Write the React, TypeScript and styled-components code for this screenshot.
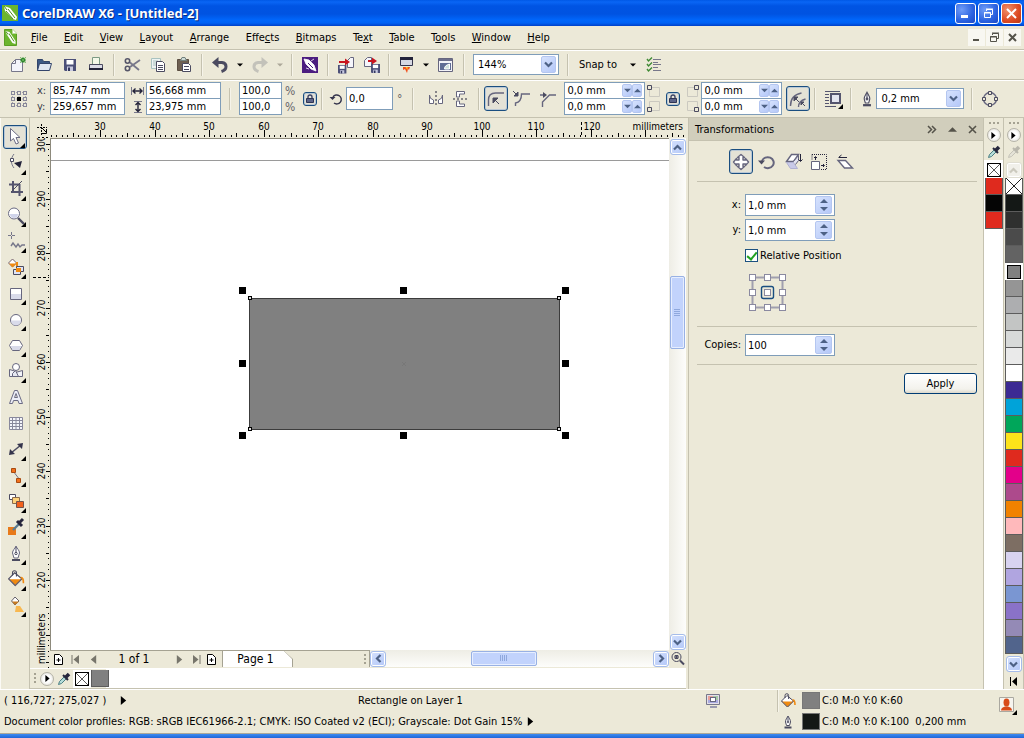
import React from 'react';
import styled, { createGlobalStyle, css } from 'styled-components';

const face = '#ece9d8';
const shade = '#c5c2b0';
const field = '#7f9db9';
const ink = '#4b4b60';
const ui = '"DejaVu Sans Condensed", "DejaVu Sans", sans-serif';

const GlobalStyle = createGlobalStyle`
  * { box-sizing: border-box; }
  html, body { margin: 0; height: 100%; }
  body { font: 11px/14px ${ui}; color: #000; background: ${face}; }
  button, input, select { font: inherit; color: inherit; margin: 0; padding: 0; }
  button { border: 0; background: none; }
  svg { display: block; flex: none; }
`;

const AppWindow = styled.div`
  display: flex;
  flex-direction: column;
  min-height: 100vh;
  overflow: hidden;
  background: ${face};
`;

/* ---------- title bar and menu ---------- */

const TitleBar = styled.header`
  display: flex;
  align-items: center;
  gap: 3px;
  height: 26px;
  padding: 0 2px 0 2px;
  background: linear-gradient(#0058e6 0, #0a66f5 2px, #0054e3 6px, #0053e1 14px, #0066fb 20px, #0062f4 23px, #0040c8 26px);
`;

const Title = styled.h1`
  flex: 1;
  margin: 0;
  font: bold 13px/18px "Noto Sans", sans-serif;
  color: #fff;
  text-shadow: 1px 1px #0a2a80;
`;

const CaptionButton = styled.button<{ $close?: boolean }>`
  display: flex;
  align-items: center;
  justify-content: center;
  width: 21px;
  height: 21px;
  margin-left: -1px;
  border: 1px solid #fff;
  border-radius: 3px;
  background: ${p =>
    p.$close
      ? 'radial-gradient(circle at 30% 30%, #f0906c, #dd4a22 60%, #b93a14)'
      : 'radial-gradient(circle at 30% 30%, #6f9cf8, #2b62e0 60%, #1c49c6)'};
`;

const MenuBar = styled.nav`
  display: flex;
  align-items: center;
  height: 23px;
  padding: 0 3px 0 4px;
`;

const Menus = styled.div`
  display: flex;
  flex: 0 1 533px;
  justify-content: space-between;
  margin-right: auto;
  padding-left: 14px;
`;

const MenuItem = styled.button`
  height: 18px;
`;

const DocButton = styled.button`
  display: flex;
  align-items: center;
  justify-content: center;
  width: 17px;
  height: 17px;
  margin-left: 1px;
  background: #f8f7f1;
`;

/* ---------- tool bars ---------- */

const Bar = styled.div<{ $height: number }>`
  display: flex;
  align-items: center;
  height: ${p => p.$height}px;
  border-top: 1px solid ${shade};
  box-shadow: inset 0 1px #fff;
`;

const StandardBar = styled(Bar)`
  padding-left: 5px;
`;

const PropertyBar = styled(Bar)`
  padding-left: 9px;
  border-bottom: 1px solid ${shade};
`;

const Divider = styled.span<{ $gap?: number }>`
  flex: none;
  width: 2px;
  height: 22px;
  margin: 0 ${p => p.$gap ?? 4}px;
  border-left: 1px solid ${shade};
  border-right: 1px solid #f6f4ea;
`;

const pressed = css`
  border: 1px solid #1a4e80;
  border-radius: 3px;
  background: #e4e2d6;
  box-shadow: inset 0 0 0 1px #b9c8d6;
`;

const IconButton = styled.button<{ $width?: number; $pressed?: boolean }>`
  display: flex;
  flex: none;
  align-items: center;
  justify-content: center;
  width: ${p => p.$width ?? 26}px;
  height: 25px;
  ${p => p.$pressed && pressed}
`;

const LockButton = styled.button`
  display: flex;
  flex: none;
  align-items: center;
  justify-content: center;
  width: 14px;
  height: 14px;
  ${pressed}
`;

const Pair = styled.div<{ $width?: number; $gap?: number }>`
  display: flex;
  flex: none;
  flex-direction: column;
  align-items: flex-start;
  gap: ${p => p.$gap ?? 0}px;
  width: ${p => (p.$width ? `${p.$width}px` : 'auto')};
`;

const Caption = styled.label`
  line-height: 16px;
  color: #3c3c48;
`;

const Unit = styled.span`
  font-size: 12px;
  line-height: 16px;
  color: #66646a;
`;

const Field = styled.div<{ $width: number; $height: number }>`
  display: flex;
  flex: none;
  align-items: center;
  width: ${p => p.$width}px;
  height: ${p => p.$height}px;
  padding: 1px 2px 1px 2px;
  border: 1px solid ${field};
  background: #fff;
  & + & { margin-top: -1px; }
`;

const Input = styled.input`
  flex: 1;
  min-width: 0;
  height: 100%;
  border: 0;
  outline: 0;
  background: none;
`;

const Select = styled.select`
  flex: 1;
  min-width: 0;
  height: 100%;
  padding-left: 2px;
  border: 0;
  outline: 0;
  background: none;
  appearance: none;
`;

const blue = css`
  border: 1px solid #b4c6f0;
  border-radius: 2px;
  background: linear-gradient(135deg, #d6e2fd, #b5c8f8);
`;

const Arrow = styled.span`
  display: flex;
  align-items: center;
  justify-content: center;
  width: 15px;
  height: 100%;
  ${blue}
`;

const MiniSpin = styled.button`
  display: flex;
  align-items: center;
  justify-content: center;
  width: 10px;
  height: 13px;
  ${blue}
`;

const TallSpin = styled.div`
  display: flex;
  flex-direction: column;
  width: 17px;
  height: 18px;
  ${blue}
`;

const TallSpinButton = styled.button`
  display: flex;
  flex: 1;
  align-items: center;
  justify-content: center;
`;

/* ---------- work area ---------- */

const Main = styled.main`
  display: flex;
  flex: 1;
  min-height: 0;
`;

const Toolbox = styled.div`
  display: flex;
  flex: none;
  flex-direction: column;
  width: 30px;
  padding: 6px 0 0 2px;
  border-left: 1px solid #fbfaf5;
  border-right: 1px solid ${shade};
`;

const ToolButton = styled.button<{ $pressed?: boolean }>`
  width: 26px;
  height: 26px;
  ${p => p.$pressed && css`
    width: 24px;
    height: 24px;
    margin: 1px 0 2px;
    & > svg { margin: -2px; }
    ${pressed}
  `}
`;

const Center = styled.section`
  display: flex;
  flex: 1;
  flex-direction: column;
  min-width: 0;
`;

const DrawingGrid = styled.div`
  display: grid;
  flex: 1;
  grid-template: 20px 1fr 18px / 20px 1fr 17px;
  min-height: 0;
  padding-right: 2px;
`;

const RulerTop = styled.div`
  grid-column: 2 / 4;
  min-width: 0;
`;

const RulerSide = styled.div`
  grid-row: 2 / 4;
  min-height: 0;
`;

const RulerSvg = styled.svg`
  width: 100%;
  height: 100%;
  overflow: hidden;
  font: 10px ${ui};
`;

const Canvas = styled.div`
  min-width: 0;
  min-height: 0;
  overflow: hidden;
  border-left: 1px solid #8d8a7c;
  border-top: 1px solid #8d8a7c;
  background: #fff;
`;

const ScrollY = styled.div`
  display: flex;
  flex-direction: column;
  align-items: center;
  padding-top: 1px;
  background: linear-gradient(90deg, #eeede5, #fdfdfb);
`;

const ScrollX = styled.div`
  display: flex;
  flex: 1;
  align-items: center;
  height: 17px;
  background: linear-gradient(#eeede5, #fdfdfb);
`;

const ScrollButton = styled.button<{ $off?: boolean }>`
  display: flex;
  flex: none;
  align-items: center;
  justify-content: center;
  width: 16px;
  height: 16px;
  border: 1px solid ${p => (p.$off ? '#e0ded2' : '#a5bcea')};
  border-radius: 3px;
  box-shadow: inset 0 0 0 1px #fff;
  background: ${p => (p.$off ? '#f1f0ea' : 'linear-gradient(135deg, #d3e0fd, #b4c8f8)')};
`;

const Thumb = styled.div<{ $vertical?: boolean }>`
  display: flex;
  flex: none;
  align-items: center;
  justify-content: center;
  width: ${p => (p.$vertical ? 15 : 66)}px;
  height: ${p => (p.$vertical ? 73 : 15)}px;
  border: 1px solid #98b1e4;
  border-radius: 2px;
  box-shadow: inset 0 0 0 1px #e6eeff;
  background: #c2d3fc;
`;

const Track = styled.span<{ $grow: number }>`
  flex: ${p => p.$grow} 1 0;
`;

const PageBar = styled.div`
  display: flex;
  grid-column: 2 / 4;
  align-items: flex-start;
  min-width: 0;
`;

const PageTools = styled.div`
  display: flex;
  flex: 317 1 0;
  align-items: center;
  height: 17px;
  padding: 0 2px;
  border-top: 1px solid #a5a292;
  border-right: 1px solid #a5a292;
`;

const PageScroll = styled.div`
  display: flex;
  flex: 318 1 0;
`;

const PageButton = styled.button<{ $width: number }>`
  display: flex;
  justify-content: center;
  width: ${p => p.$width}px;
`;

const PageCount = styled.output`
  width: 68px;
  text-align: center;
  font-size: 12px;
`;

const TabEdge = styled.div`
  width: 71px;
  height: 16px;
  margin-left: 2px;
  padding: 0 1px;
  background: #a5a292;
  clip-path: polygon(0 0, 62px 0, 100% 8px, 100% 100%, 0 100%);
`;

const Tab = styled.button`
  width: 69px;
  height: 16px;
  padding-right: 4px;
  font-size: 12px;
  background: #fff;
  clip-path: polygon(0 0, 61px 0, 100% 8px, 100% 100%, 0 100%);
`;

const Spacer = styled.span`
  flex: 1;
`;

const DocumentPalette = styled.div`
  display: flex;
  align-items: center;
  height: 21px;
  margin-right: 2px;
  border-top: 1px solid #fff;
  border-bottom: 1px solid ${shade};
  background: linear-gradient(90deg, ${face} 76px, #fff 76px);
`;

/* ---------- docker ---------- */

const Docker = styled.aside`
  flex: none;
  width: 296px;
  border-left: 1px solid ${shade};
  border-right: 1px solid ${shade};
`;

const DockerHead = styled.div`
  display: flex;
  align-items: center;
  gap: 2px;
  height: 23px;
  padding: 1px 2px 0 6px;
  border-bottom: 1px solid ${shade};
  background: #d1cebc;
`;

const DockerTitle = styled.h2`
  flex: 1;
  margin: 0;
  font: inherit;
`;

const HeadButton = styled.button`
  display: flex;
  align-items: center;
  justify-content: center;
  width: 18px;
  height: 18px;
`;

const DockerSection = styled.section`
  margin: 0 6px 0 8px;
  border-bottom: 1px solid ${shade};
`;

const Modes = styled(DockerSection)`
  display: flex;
  gap: 2px;
  padding: 8px 0 7px 32px;
`;

const Position = styled(DockerSection)`
  display: grid;
  grid-template-columns: 44px auto;
  column-gap: 4px;
  row-gap: 3px;
  padding: 12px 0 14px;
`;

const Copies = styled(DockerSection)`
  display: grid;
  grid-template-columns: 44px auto;
  column-gap: 4px;
  padding: 7px 0 8px;
`;

const RowLabel = styled.label`
  align-self: center;
  justify-self: end;
  white-space: nowrap;
`;

const CheckLabel = styled.label`
  display: flex;
  grid-column: 2;
  align-items: center;
  gap: 2px;
  height: 23px;
`;

const Check = styled.input`
  display: flex;
  justify-content: center;
  width: 13px;
  height: 13px;
  margin: 0;
  border: 1px solid #1c5180;
  background: #fff;
  appearance: none;
  &:checked::before {
    content: '';
    width: 4px;
    height: 8px;
    border: solid #21a121;
    border-width: 0 2px 2px 0;
    transform: rotate(40deg);
  }
`;

const AnchorButton = styled.button`
  grid-column: 2;
  justify-self: start;
  margin: 3px 0 0 3px;
`;

const DockerFoot = styled.div`
  display: flex;
  justify-content: flex-end;
  padding: 8px 6px 0 0;
`;

const ApplyButton = styled.button`
  width: 73px;
  height: 21px;
  border: 1px solid #003c74;
  border-radius: 3px;
  background: linear-gradient(#fff, #f3f2ec 80%, #dcd8cb);
`;

/* ---------- colour palettes ---------- */

const Palette = styled.div<{ $white?: boolean }>`
  display: flex;
  flex: none;
  flex-direction: column;
  align-items: center;
  width: 20px;
  padding-top: 4px;
  border-right: 1px solid ${shade};
  background: ${p => (p.$white ? `linear-gradient(${face} 42px, #fff 42px)` : face)};
`;

const RoundButton = styled.button`
  display: flex;
  align-items: center;
  justify-content: center;
  width: 14px;
  height: 14px;
  border: 1px solid #b5b3a8;
  border-radius: 50%;
  background: radial-gradient(#fff 40%, #d8d6cc);
`;

const Swatch = styled.button<{ $color: string; $selected?: boolean }>`
  flex: none;
  width: 18px;
  height: 17px;
  border: 1px solid #5c5c5c;
  border-top-width: 0;
  background: ${p => p.$color};
  ${p => p.$selected && css`
    border: 1px solid #000;
    outline: 2px solid #fff;
    width: 14px;
    height: 14px;
    margin: 2px 2px 1px;
  `}
`;

const PaletteHead = styled.div<{ $tail: number }>`
  display: flex;
  flex: none;
  flex-direction: column;
  align-items: center;
  gap: 3px;
  height: ${p => p.$tail}px;
`;

const PaletteFoot = styled.div`
  display: flex;
  flex-direction: column;
  align-items: center;
  gap: 5px;
  padding-top: 2px;
`;

/* ---------- status bar ---------- */

const StatusBar = styled.footer`
  display: flex;
  height: 44px;
  padding: 0 6px 0 4px;
  border-top: 1px solid #fff;
`;

const StatusMain = styled.div`
  flex: 1;
  min-width: 0;
`;

const StatusRow = styled.div`
  display: flex;
  align-items: center;
  height: 21px;
  white-space: pre;
`;

const Coordinates = styled.span`
  display: flex;
  align-items: center;
  gap: 10px;
  width: 354px;
`;

const StatusText = styled.span`
  flex: 1;
`;

const ProfileText = styled.span`
  margin-right: 4px;
`;

const StatusColors = styled.div`
  width: 218px;
`;

const StatusSwatch = styled.span<{ $color: string }>`
  width: 18px;
  height: 17px;
  margin: 0 2px 0 6px;
  border: 1px solid #777;
  background: ${p => p.$color};
`;

const Proof = styled.span`
  width: 71px;
`;

const UserButton = styled.button`
  margin-top: 6px;
  width: 20px;
  height: 20px;
`;

const FrameEdge = styled.div`
  height: 5px;
  border-top: 1px solid #aca899;
  background: linear-gradient(#3d8af0, #1f66d8);
`;

/* ---------- drawings ---------- */

type G = { children: React.ReactNode; size?: number; h?: number };

const Glyph = ({ children, size = 20, h }: G) => (
  <svg width={size} height={h ?? size} viewBox={`0 0 ${size} ${h ?? size}`} fill="none" stroke={ink} aria-hidden="true">
    {children}
  </svg>
);

const Tri = ({ dir, size = 7, color = '#000' }: { dir: 'up' | 'down' | 'left' | 'right'; size?: number; color?: string }) => {
  const s = size, m = s / 2;
  const d = {
    down: `M0 ${m - m / 2}H${s}L${m} ${m + m / 2}Z`,
    up: `M0 ${m + m / 2}H${s}L${m} ${m - m / 2}Z`,
    left: `M${s * 0.8} 0V${s}L${s * 0.2} ${m}Z`,
    right: `M${s * 0.2} 0V${s}L${s * 0.8} ${m}Z`,
  }[dir];
  return <svg width={s} height={s} aria-hidden="true"><path d={d} fill={color} /></svg>;
};

const Chevron = ({ dir, color = '#4d6185' }: { dir: 'up' | 'down' | 'left' | 'right'; color?: string }) => {
  const d = { down: 'M1 2.5l3.500 3.500L8 2.500', up: 'M1 6.500L4.500 3 8 6.500', left: 'M6.500 1L3 4.500 6.500 8', right: 'M2.500 1L6 4.500 2.500 8' }[dir];
  return <svg width="9" height="9" aria-hidden="true"><path d={d} fill="none" stroke={color} strokeWidth="2.200" /></svg>;
};

const Grip = ({ vertical }: { vertical?: boolean }) => (
  <svg width={vertical ? 3 : 10} height={vertical ? 11 : 3} aria-hidden="true" fill="#a5a292">
    {[0, 4, 8].map(n => <rect key={n} x={vertical ? 0 : n} y={vertical ? n : 0} width="2" height="2" />)}
  </svg>
);

const Logo = () => (
  <Glyph size={17}>
    <path d="M0 0h16v16H0z" fill="#6cb52d" stroke="none" />
    <path d="M2 1l6 2 7 9-1 3-3-1L3 6z" fill="#fff" stroke="none" />
    <path d="M2 1l3 4M6 4l7 9M4 6l7 8" stroke="#4d8f1b" />
  </Glyph>
);

const DocLogo = () => (
  <Glyph size={13} h={17}>
    <path d="M.5.5h8l4 4v12H.5z" fill="#6cb52d" stroke="#5a9e22" />
    <path d="M8.500 0v4.500h4.500z" fill="#fff" stroke="#bcd9a0" />
    <path d="M1.500 2l4 1 6 9v3l-3-1-6-9z" fill="#fff" stroke="none" />
    <path d="M2 2.500l2 3M5 4.500l5 8" stroke="#4d8f1b" />
  </Glyph>
);

const Eyedropper = ({ off }: { off?: boolean }) => (
  <Glyph size={14}>
    <path d="M1.500 12.500l1-3 5-5 2 2-5 5z" fill={off ? '#e4e2d6' : '#b5dcd8'} stroke={off ? '#c5c3b8' : '#4b7f83'} />
    <path d="M6 3l5 5M8 6l3.500-3.500" stroke={off ? '#b9b7ac' : '#26263c'} strokeWidth="2" />
    <path d="M9 5l3-3" stroke={off ? '#b9b7ac' : '#26263c'} strokeWidth="3.500" />
  </Glyph>
);

const NoColor = ({ w = 16 }: { w?: number }) => (
  <svg width={w} height={w} viewBox="0 0 16 16" aria-hidden="true"><path d="M0 0l16 16M16 0L0 16" stroke="#222" /></svg>
);

const Padlock = () => (
  <Glyph size={10}>
    <path d="M3 5V3a2 2 0 0 1 4 0v2" stroke="#3c4468" strokeWidth="1.400" />
    <path d="M1.500 4.500h7v4h-7z" fill="#5c6488" stroke="#2e3454" />
  </Glyph>
);

const Pen = ({ size = 16 }: { size?: number }) => (
  <svg width={size} height={size} viewBox="0 0 16 16" fill="#fff" stroke={ink} aria-hidden="true">
    <path d="M8 2c1 2 2.500 3.500 2.500 6L9.500 11.500h-3L5.500 8c0-2.500 1.500-4 2.500-6z" />
    <path d="M8 3v5" /><circle cx="8" cy="8" r=".8" />
    <path d="M4.500 13.500h7" strokeWidth="2" />
  </svg>
);

const Bucket = ({ size = 16 }: { size?: number }) => (
  <svg width={size} height={size} viewBox="0 0 16 16" aria-hidden="true">
    <path d="M1.500 8L7 2.500l6.500 5.500L7.500 14z" fill="#fff" stroke={ink} />
    <path d="M2 8.500h11.500L7.500 14z" fill="#f08a10" />
    <path d="M1.500 8l6 6 6-6" fill="none" stroke="#6b6470" />
    <path d="M5 5V2.500a1.800 1.800 0 0 1 3.600 0V6" fill="none" stroke={ink} />
    <path d="M12.500 7q2.500-.5 2.500 5" fill="none" stroke="#f08a10" strokeWidth="1.600" />
  </svg>
);

const Save = ({ x = 0, y = 0, s = 1 }: { x?: number; y?: number; s?: number }) => (
  <g transform={`translate(${x} ${y}) scale(${s})`}>
    <path d="M0 0h12v12H1l-1-1z" fill="#4c5078" stroke="none" />
    <path d="M2.500 1h7v4.500h-7z" fill="#fff" stroke="none" />
    <path d="M3 7.500h6V12H3z" fill="#c8cae0" stroke="none" />
    <path d="M4 8.500h2V12H4z" fill="#34385e" stroke="none" />
  </g>
);

const corner = <path d="M23 19v5h-5z" fill="#000" stroke="none" />;

const standard = {
  new: <Glyph><path d="M3.500 8.500l4-4h7v12h-11z" fill="#f4f4fa" stroke="#77778a" /><path d="M3.500 8.500h4V4.500" stroke="#77778a" /><circle cx="15" cy="5" r="2.600" fill="#2d8a2d" stroke="none" /><path d="M12 2l6 6M18 2l-6 6" stroke="#6fae5e" strokeWidth=".8" /></Glyph>,
  open: <Glyph><path d="M3.500 15.500v-11h5l1 2h6v3" fill="#3c5a86" stroke="#33456b" /><path d="M3.500 15.500l2-7h12l-2 7z" fill="#dfe6f2" stroke="#33456b" /></Glyph>,
  save: <Glyph><Save x={4} y={4} /></Glyph>,
  print: <Glyph><path d="M6.500 10V2.500h7V10" fill="#f4f8e8" stroke="#7d9a84" /><path d="M3.500 9.500h13v5h-13z" fill="#dcdce6" /><path d="M3 14h14" strokeWidth="2" stroke="#23233a" /></Glyph>,
  cut: <Glyph><path d="M8 7.500L17 15M8 12l10-7" stroke="#77778a" strokeWidth="1.800" /><circle cx="5.500" cy="6" r="2.200" stroke="#555568" strokeWidth="1.600" /><circle cx="5.500" cy="13.500" r="2.200" stroke="#555568" strokeWidth="1.600" /></Glyph>,
  copy: <Glyph><path d="M3.500 3.500h9v10h-9zM5 6h5M5 8h5M5 10h5" fill="#edf3f2" stroke="#a9c2c0" /><path d="M8.500 6.500h6l2 2v8h-8zM10 10.500h5M10 12.500h5M10 14.500h5" fill="#fff" /></Glyph>,
  paste: <Glyph><path d="M3.500 4.500h11v11h-11z" fill="#6e6052" stroke="#5b4e42" /><path d="M6.500 5.500l1.500-3h3l1.500 3z" fill="#ccd9d5" stroke="#72817d" /><path d="M8.500 8.500h6l2 2v6h-8zM10 11.500h5M10 14.500h5" fill="#fff" /></Glyph>,
  undo: <Glyph><path d="M7 7.500h5q4 .5 4 4t-4.500 5" strokeWidth="3" /><path d="M8.500 2v11L2 7.500z" fill={ink} stroke="none" /></Glyph>,
  redo: <Glyph><path d="M13 7.500H8q-4 .5-4 4t4.500 5" strokeWidth="3" stroke="#c3c2ba" /><path d="M11.500 2v11L18 7.500z" fill="#c3c2ba" stroke="none" /></Glyph>,
  connect: <Glyph><path d="M2 2h16v16H2z" fill="#4c1d80" stroke="none" /><path d="M4 4l5 1 5 5 2 6-5-2-5-5zM11 6l3-2M6 13l3 1" fill="#fff" stroke="#fff" strokeWidth=".8" /><path d="M8 8l5 5" stroke="#4c1d80" /></Glyph>,
  import: <Glyph><path d="M11.500 5.500l3-3h3v10h-6z" fill="#f5f5fb" stroke="#66667e" /><Save x={2} y={10} s={0.7} /><path d="M3 7h7" stroke="#c8141e" strokeWidth="2" /><path d="M9 3.500v7l5-3.500z" fill="#c8141e" stroke="none" /></Glyph>,
  export: <Glyph><path d="M2.500 5.500l3-3h4v9h-7z" fill="#f5f5fb" stroke="#66667e" /><Save x={9} y={9} s={0.75} /><path d="M6 6h5" stroke="#c8141e" strokeWidth="2" /><path d="M10 2.500v7l5-3.500z" fill="#c8141e" stroke="none" /></Glyph>,
  launch: <Glyph><path d="M4.500 2.500h12v8h-12z" fill="#d6d8e2" stroke="#34344c" /><path d="M4 3.500h13" stroke="#23233a" strokeWidth="3" /><path d="M7 12h7l-1 3-1-1-1 4-2-4-2 1z" fill="#f2501c" stroke="none" /><path d="M9.500 12h2v3z" fill="#ffd21c" stroke="none" /></Glyph>,
  welcome: <Glyph><path d="M2.500 3.500h14v13h-14z" fill="#f3f3f8" stroke="#66667e" /><path d="M3 5h13" strokeWidth="2" stroke="#6d6f8c" /><path d="M4 8h11v7H4z" fill="#5f6c94" stroke="none" /><path d="M8.500 14c0-3 2-4 5-5v5z" fill="#cfe0dc" stroke="#fff" /></Glyph>,
  options: <Glyph><path d="M9 4.500h8M9 7.500h5M9 9.500h8M9 12.500h5M9 15.500h8" stroke="#77778a" /><path d="M3 4l1.500 2L8 2.500M3 9l1.500 2L8 7.500M3 14l1.500 2L8 12.500" stroke="#3f8a34" strokeWidth="1.400" /></Glyph>,
};

const transforms = {
  move: <Glyph><path d="M8 8V5.500H6.500L10 2.500l3.500 3H12V8h2.500V6.500L17.500 10l-3 3.500V12H12v2.500h1.500l-3.500 3-3.500-3H8V12H5.500v1.500L2.500 10l3-3.500V8z" fill="#fff" stroke="#66667e" strokeWidth="1.400" strokeLinejoin="round" /></Glyph>,
  rotate: <Glyph><path d="M5 9a6 5.500 0 1 1 2 6" stroke="#66667e" strokeWidth="2" /><path d="M1 8.500h7l-3.500 4z" fill={ink} stroke="none" /></Glyph>,
  scale: <Glyph><path d="M3.500 9.500l5-7h7l-5 7z" fill="#fff" strokeWidth="1.400" stroke="#66667e" /><path d="M3.500 10.500h7l4 6h-7z" fill="#c9cae8" stroke="#b0b1d2" /><path d="M10.500 9.500l5-6v5l-3 4" fill="#e2e3f1" stroke="#66667e" /><path d="M17.500 2v7M15.500 7.500l2 2 2-2" stroke="#23233a" /></Glyph>,
  size: <Glyph><path d="M2.500 9.500h8v8h-8z" fill="#fff" stroke="#66667e" /><path d="M3 2.500h14.500V18" strokeDasharray="1 1" stroke="#23233a" /><path d="M12 17.500h6M3 2.500V8" strokeDasharray="1 1" stroke="#23233a" /><path d="M6.500 8V5M5 6l1.500-1.500L8 6M12 13.500h3M14 12l1.500 1.500L14 15" stroke="#23233a" /></Glyph>,
  skew: <Glyph><path d="M3 8.500h7.500l7 7.500h-8z" fill="#fff" stroke="#66667e" strokeWidth="1.400" /><path d="M12 5.500H4M6.500 3L3.500 5.500" stroke="#23233a" /></Glyph>,
};

const tools: [string, React.ReactNode][] = [
  ['Pick tool', <><path d="M8.500 4.500v12.500l3-2.500 2.500 5.500 2.500-1-2.500-5.500h4z" fill="#fff" stroke="#6b6b84" />{corner}</>],
  ['Shape tool', <><path d="M11 3c-4 5-3 10 0 14" stroke="#77778a" /><path d="M7.500 7.500h3v3h-3z" fill="#fff" /><path d="M11 12l8-2-2 7z" fill="#23233a" stroke="none" />{corner}</>],
  ['Crop tool', <><path d="M10 4v12M6 7.500h10M8 15h12M16.500 7v12" stroke="#55556e" strokeWidth="2" /><path d="M8 15L19 4" stroke={ink} />{corner}</>],
  ['Zoom tool', <><circle cx="11" cy="10.500" r="5.500" fill="#fff" stroke="#6b6b84" /><path d="M7 11h8a4 4 0 0 1-8 0z" fill="#d0d4ea" stroke="none" /><path d="M15 15l6 6" strokeWidth="2.400" />{corner}</>],
  ['Freehand tool', <><path d="M8.500 3v7M5 6.500h7" stroke="#77778a" strokeDasharray="3 1" /><path d="M8 17l2-3 3 4 2-3 2 3 2-2h3" stroke="#77778a" strokeWidth="1.400" />{corner}</>],
  ['Smart fill tool', <><path d="M5.500 8l4-4 4 4-4 4z" fill="#fff" stroke="#77626a" /><path d="M6 8.500h7.500l-4 4z" fill="#f08a10" stroke="none" /><path d="M14 7v6" stroke="#f08a10" strokeWidth="2" /><path d="M13.500 11.500h7v5h-7zM10.500 14.500h7v5h-7z" fill="#dfe3f4" /><path d="M13 13h5v4h-5z" fill="#f08a10" stroke="none" />{corner}</>],
  ['Rectangle tool', <><path d="M7.500 7.500h11v11h-11z" fill="#fff" stroke="#66667e" /><path d="M8 13h10v5H8z" fill="#d9dbea" stroke="none" />{corner}</>],
  ['Ellipse tool', <><circle cx="13" cy="13" r="5.500" fill="#fff" stroke="#66667e" /><path d="M8 13.500h10a5 5 0 0 1-10 0z" fill="#d9dbea" stroke="none" />{corner}</>],
  ['Polygon tool', <><path d="M9.500 7.500h7l3 5-3 5h-7l-3-5z" fill="#fff" stroke="#66667e" /><path d="M7.500 13h11L16 17h-6z" fill="#d9dbea" stroke="none" />{corner}</>],
  ['Basic shapes tool', <><circle cx="13" cy="8" r="3.500" fill="#fff" stroke="#66667e" /><path d="M6.500 10.500l5 1.500v5.500h-5zM12.500 17.500v-4l7-2v6z" fill="#f2f3f8" stroke="#66667e" /><path d="M9.500 14.500l3-3 3 6h-6z" fill="#e6e8f2" stroke="#66667e" />{corner}</>],
  ['Text tool', <path d="M6.500 18.500l5-13h3l5 13h-3.500l-1-3h-4.500l-1 3zM11.500 12.500h3l-1.500-4z" fill="#eceef8" stroke="#6b6b84" />],
  ['Table tool', <path d="M6.500 6.500h13v12h-13zM7 9.500h12M7 12.500h12M7 15.500h12M9.500 7v11M13 7v11M16.500 7v11" fill="#f4f5fb" stroke="#88889c" />],
  ['Dimension tool', <><path d="M8 16L18 8" strokeWidth="1.600" /><path d="M6 18l1-6 5 5zM20 6l-1 6-5-5z" fill="#34344c" stroke="none" />{corner}</>],
  ['Connector tool', <><path d="M10 8l7 9" stroke="#77778a" /><path d="M8.500 5.500h4v4h-4z" fill="#f2711c" stroke="#a84a10" /><path d="M13.500 15.500h4v4h-4z" fill="#f2711c" stroke="#a84a10" />{corner}</>],
  ['Blend tool', <><path d="M6.500 5.500h6v5h-6z" fill="#fff" /><path d="M9.500 8.500h7v6h-7z" fill="#ffd27a" stroke="#8a6a4a" /><path d="M13.500 12.500h7v6h-7z" fill="#f2601c" stroke="#74524a" />{corner}</>],
  ['Color eyedropper', <><path d="M5 12h8v8H5z" fill="#e87a1a" stroke="none" /><path d="M10 15l6-6" stroke="#5c7c90" strokeWidth="2.400" /><path d="M14 6l5 5M16 8l4-4" stroke="#26263c" strokeWidth="3" />{corner}</>],
  ['Outline pen', <><path d="M13 5c1 3 3.500 4 3.500 7L15 17h-4l-1.500-5c0-3 2.500-4 3.500-7z" fill="#fff" stroke="#66667e" /><path d="M13 6v6" /><circle cx="13" cy="12.500" r="1.200" /><path d="M9 19h8" strokeWidth="2" />{corner}</>],
  ['Fill tool', <><g transform="translate(4 3) scale(1.100)" stroke="none"><Bucket size={16} /></g>{corner}</>],
  ['Interactive fill', <><path d="M8.500 8l3.500-4 4 4-4 4z" fill="#fff" stroke="#66626a" /><path d="M9 8.500h7l-4 3.500z" fill="#c87a20" stroke="none" /><path d="M13 13h4l4 6h-9z" fill="#f8b850" stroke="none" />{corner}</>],
];

const MM = 5.45;

const HorizontalRuler = () => (
  <RulerSvg aria-hidden="true">
    {Array.from({ length: 170 }, (_, i) => {
      const m = 21 + i;
      const x = Math.round(50 + (m - 30) * MM);
      const major = m % 10 === 0;
      return (
        <React.Fragment key={m}>
          <rect x={x} y={major ? 12 : m % 5 === 0 ? 15 : 17} width="1" height={major ? 7 : m % 5 === 0 ? 4 : 2} />
          {major && m < 130 && <text x={m === 120 ? x + 1 : x} y="12" textAnchor="middle">{m}</text>}
        </React.Fragment>
      );
    })}
    <path d="M531.500 4v15" stroke="#000" strokeDasharray="3 2" />
    <svg x="100%" overflow="visible"><text x="-3" y="12" textAnchor="end">millimeters</text></svg>
  </RulerSvg>
);

const VerticalRuler = () => (
  <RulerSvg aria-hidden="true">
    {Array.from({ length: 160 }, (_, i) => {
      const m = 300 - i;
      const y = Math.round(6 + i * MM);
      const major = m % 10 === 0;
      return (
        <React.Fragment key={m}>
          <rect y={y} x={major ? 16 : m % 5 === 0 ? 16 : 18} height="1" width={major ? 4 : m % 5 === 0 ? 3 : 1} />
          {major && m > 210 && <text transform={`translate(15 ${y}) rotate(-90)`} textAnchor="middle">{m}</text>}
        </React.Fragment>
      );
    })}
    <path d="M3 139.500h16" stroke="#000" strokeDasharray="3 2" />
    <svg y="100%" overflow="visible"><text transform="translate(15 -4) rotate(-90)">millimeters</text></svg>
  </RulerSvg>
);

const Drawing = () => (
  <svg width="100%" height="100%" role="img" aria-label="Selected rectangle">
    <path d="M0 21.500H4000" stroke="#9a9a9a" />
    <rect x="198.500" y="159.500" width="310" height="131" fill="#808080" stroke="#3c3c3c" />
    <path d="M351 223l4 4M355 223l-4 4" stroke="#787878" />
    {[199, 508].map(x => [159, 290].map(y => (
      <rect key={`${x}-${y}`} x={x - 1.5} y={y - 1.5} width="3" height="3" fill="#ddd" stroke="#000" />
    )))}
    {[188, 349, 511].map((x, c) => [148, 221, 293].map((y, r) => (
      c === 1 && r === 1 ? null : <rect key={`${x}-${y}`} x={x} y={y} width="7" height="7" />
    )))}
  </svg>
);

const paletteColors = [
  '#141816', '#2f302f', '#4b4b4b', '#636363', '#808080', '#959595', '#adaeb0', '#c3c5c4', '#d8dad9',
  '#eaeaea', '#ffffff', '#3c2a93', '#00a3d9', '#00a65a', '#fde31a', '#df2a1e', '#e3008a', '#ad4a8c',
  '#f18200', '#ffb9bb', '#7d6e63', '#d8d3f0', '#b0a5e0', '#7a96d2', '#8a72c8', '#948ab6', '#51648c',
];

const menus: [string, string, string][] = [
  ['', 'F', 'ile'], ['', 'E', 'dit'], ['', 'V', 'iew'], ['', 'L', 'ayout'], ['', 'A', 'rrange'], ['Effe', 'c', 'ts'],
  ['', 'B', 'itmaps'], ['Te', 'x', 't'], ['', 'T', 'able'], ['T', 'o', 'ols'], ['', 'W', 'indow'], ['', 'H', 'elp'],
];

const RestoreMark = ({ color }: { color: string }) => (
  <svg width="11" height="11" aria-hidden="true" fill="none" stroke={color}>
    <path d="M3.500 3V1.500h6v5H8M3 1h7" /><path d="M1.500 4.500h6v5h-6zM1 5h7" />
  </svg>
);

const TextField = ({ label, value, width, height = 17, id }: { label: string; value: string; width: number; height?: number; id?: string }) => (
  <Field $width={width} $height={height}><Input id={id} aria-label={label} defaultValue={value} /></Field>
);

const MiniField = ({ label }: { label: string }) => (
  <Field $width={81} $height={17}>
    <Input aria-label={label} defaultValue="0,0 mm" />
    <MiniSpin aria-label={`${label} down`}><Tri dir="down" color="#4d6185" /></MiniSpin>
    <MiniSpin aria-label={`${label} up`}><Tri dir="up" color="#4d6185" /></MiniSpin>
  </Field>
);

const SpinField = ({ id, value }: { id: string; value: string }) => (
  <Field $width={90} $height={22}>
    <Input id={id} defaultValue={value} />
    <TallSpin>
      <TallSpinButton aria-label="Increase"><Tri dir="up" size={8} color="#4d6185" /></TallSpinButton>
      <TallSpinButton aria-label="Decrease"><Tri dir="down" size={8} color="#4d6185" /></TallSpinButton>
    </TallSpin>
  </Field>
);

const Combo = ({ label, value, width }: { label: string; value: string; width: number }) => (
  <Field $width={width} $height={21}>
    <Select aria-label={label}><option>{value}</option></Select>
    <Arrow><Chevron dir="down" /></Arrow>
  </Field>
);

const CornerIcons = ({ flip }: { flip?: boolean }) => (
  <svg width="14" height="30" viewBox="0 0 14 30" fill="none" aria-hidden="true">
    <path d={flip ? 'M1.500 3.500h10v9h-10zM1.500 17.500h10v9h-10z' : 'M2.500 3.500h10v9h-10zM2.500 17.500h10v9h-10z'} stroke="#cbc9c0" />
    <path d={flip ? 'M8.500 1.500h4v4h-4zM8.500 23.500h4v4h-4z' : 'M.5 1.500h4v4h-4zM.5 23.500h4v4h-4z'} fill={face} stroke={ink} />
  </svg>
);

const StandardTool = ({ name, label }: { name: keyof typeof standard; label: string }) => (
  <IconButton aria-label={label}>{standard[name]}</IconButton>
);

const SnapButton = styled.button`
  display: flex;
  align-items: center;
  gap: 13px;
  margin: 0 5px 0 2px;
`;

const Gap = styled.span<{ $w: number }>`
  flex: none;
  width: ${p => p.$w}px;
`;

export default function App() {
  return (
    <AppWindow>
      <GlobalStyle />
      <TitleBar>
        <Logo />
        <Title>CorelDRAW X6 - [Untitled-2]</Title>
        <CaptionButton aria-label="Minimize"><svg width="11" height="11"><path d="M1 7h7v3H1z" fill="#fff" /></svg></CaptionButton>
        <CaptionButton aria-label="Restore"><RestoreMark color="#fff" /></CaptionButton>
        <CaptionButton aria-label="Close" $close><svg width="11" height="11"><path d="M1 1l9 9M10 1l-9 9" stroke="#fff" strokeWidth="2" /></svg></CaptionButton>
      </TitleBar>

      <MenuBar>
        <DocLogo />
        <Menus>
          {menus.map(([a, b, c]) => <MenuItem key={a + b + c}>{a}<u>{b}</u>{c}</MenuItem>)}
        </Menus>
        <DocButton aria-label="Minimize document"><svg width="11" height="11"><path d="M2 7h6v2H2z" fill="#55534a" /></svg></DocButton>
        <DocButton aria-label="Restore document"><RestoreMark color="#55534a" /></DocButton>
        <DocButton aria-label="Close document"><svg width="11" height="11"><path d="M2 2l7 7M9 2l-7 7" stroke="#55534a" strokeWidth="2" /></svg></DocButton>
      </MenuBar>

      <StandardBar $height={30}>
        <StandardTool name="new" label="New" />
        <StandardTool name="open" label="Open" />
        <StandardTool name="save" label="Save" />
        <StandardTool name="print" label="Print" />
        <Divider />
        <StandardTool name="cut" label="Cut" />
        <StandardTool name="copy" label="Copy" />
        <StandardTool name="paste" label="Paste" />
        <Divider />
        <StandardTool name="undo" label="Undo" />
        <IconButton $width={14} aria-label="Undo list"><Tri dir="down" size={6} /></IconButton>
        <StandardTool name="redo" label="Redo" />
        <IconButton $width={14} aria-label="Redo list"><Tri dir="down" size={6} color="#aca899" /></IconButton>
        <Divider />
        <StandardTool name="connect" label="Search content" />
        <Divider />
        <StandardTool name="import" label="Import" />
        <StandardTool name="export" label="Export" />
        <Divider $gap={3} />
        <StandardTool name="launch" label="Application launcher" />
        <IconButton $width={14} aria-label="Launcher list"><Tri dir="down" size={6} /></IconButton>
        <StandardTool name="welcome" label="Welcome screen" />
        <Divider />
        <Gap $w={4} />
        <Combo label="Zoom level" value="144%" width={86} />
        <Divider $gap={8} />
        <SnapButton>Snap to <Tri dir="down" size={6} /></SnapButton>
        <IconButton aria-label="Options">{standard.options}</IconButton>
      </StandardBar>

      <PropertyBar $height={39}>
        <Glyph>
          <path d="M3 3.500h14M3 10h14M3 16.500h14M3.500 3v14M10 3v14M16.500 3v14" stroke="#a5a3a8" strokeDasharray="1 1" />
          {[2, 8, 14].map(x => [2, 8, 14].map(y => (
            <rect key={`${x}${y}`} x={x + 0.5} y={y + 0.5} width="3" height="3" fill={x === 8 && y === 8 ? '#000' : face} stroke={x === 8 && y === 8 ? '#000' : '#88889a'} />
          )))}
        </Glyph>
        <Gap $w={8} />
        <Pair $width={13}><Caption htmlFor="obj-x">x:</Caption><Caption htmlFor="obj-y">y:</Caption></Pair>
        <Pair>
          <TextField id="obj-x" label="Object x" value="85,747 mm" width={75} />
          <TextField id="obj-y" label="Object y" value="259,657 mm" width={75} />
        </Pair>
        <Gap $w={6} />
        <Pair $width={15} $gap={2}>
          <Glyph size={14}><path d="M.5 3v8M12.500 3v8" stroke="#77778a" /><path d="M2 7h9M4.500 4.500L2 7l2.500 2.500M8.500 4.500L11 7 8.500 9.500" stroke="#23233a" strokeWidth="1.400" /></Glyph>
          <Glyph size={14}><path d="M3 1.500h8M3 12.500h8" stroke="#77778a" /><path d="M7 3v8M4.500 5L7 2.500 9.500 5M4.500 9L7 11.500 9.500 9" stroke="#23233a" strokeWidth="1.400" /></Glyph>
        </Pair>
        <Pair>
          <TextField label="Object width" value="56,668 mm" width={75} />
          <TextField label="Object height" value="23,975 mm" width={75} />
        </Pair>
        <Divider $gap={8} />
        <Pair>
          <TextField label="Horizontal scale" value="100,0" width={43} />
          <TextField label="Vertical scale" value="100,0" width={43} />
        </Pair>
        <Gap $w={3} />
        <Pair $width={18}><Unit>%</Unit><Unit>%</Unit></Pair>
        <LockButton aria-label="Lock ratio"><Padlock /></LockButton>
        <Divider />
        <Glyph size={18}><path d="M6 7a4.500 4.500 0 1 1 1 6" stroke="#34344c" strokeWidth="1.400" /><path d="M2.500 7h6L5.500 10z" fill="#34344c" stroke="none" /></Glyph>
        <Gap $w={1} />
        <TextField label="Angle of rotation" value="0,0" width={47} height={23} />
        <Gap $w={4} />
        <Unit>°</Unit>
        <Divider $gap={10} />
        <IconButton $width={24} aria-label="Mirror horizontally"><Glyph><path d="M3.500 6v8.500h4V11q-4-1-4-5zM16.500 6v8.500h-4V11q4-1 4-5z" fill="#fff" stroke="#66667e" /><path d="M10 2v16" strokeDasharray="2 2" stroke="#23233a" /></Glyph></IconButton>
        <IconButton aria-label="Mirror vertically"><Glyph><path d="M5.500 2.500h8V5h-5v3h-3zM5.500 17.500h8V15h-5v-3h-3z" fill="#fff" stroke="#66667e" /><path d="M2 10h16" strokeDasharray="2 2" stroke="#23233a" /></Glyph></IconButton>
        <Divider />
        <IconButton $width={24} $pressed aria-label="Round corner"><Glyph><path d="M2.500 17V11q0-7 7-7H18" stroke="#66667e" strokeWidth="1.400" /><path d="M7 9v5l5-5zM8 10l5 5" fill={ink} /></Glyph></IconButton>
        <IconButton aria-label="Scalloped corner"><Glyph><path d="M4.500 17v-3q6-1 6-9H19" stroke="#66667e" strokeWidth="1.400" /><path d="M7 3v4H3zM6 6L2 2" fill={ink} /></Glyph></IconButton>
        <IconButton aria-label="Chamfered corner"><Glyph><path d="M5.500 18v-5l7-7H19M3 6h5" stroke="#66667e" strokeWidth="1.400" /><path d="M6 3l4 3-4 3z" fill={ink} stroke="none" /></Glyph></IconButton>
        <Gap $w={4} />
        <Pair><MiniField label="Top left radius" /><MiniField label="Bottom left radius" /></Pair>
        <Gap $w={2} />
        <CornerIcons />
        <Gap $w={5} />
        <LockButton aria-label="Edit corners together"><Padlock /></LockButton>
        <Gap $w={6} />
        <CornerIcons flip />
        <Gap $w={1} />
        <Pair><MiniField label="Top right radius" /><MiniField label="Bottom right radius" /></Pair>
        <Gap $w={4} />
        <IconButton $width={24} $pressed aria-label="Relative corner scaling"><Glyph><path d="M2.500 17q0-11 11-13M10.500 18q0-6 7-8" stroke="#66667e" strokeWidth="1.400" /><path d="M6 8h4l-4 4zM7 9l4 4M13 13h3l-3 3zM14 14l3 3" fill={ink} /></Glyph></IconButton>
        <Divider />
        <IconButton aria-label="Wrap text"><Glyph size={22}><path d="M3 3.500h15M3 6.500h4M3 9.500h4M3 12.500h4M3 15.500h4M3 18.500h11" stroke="#55556e" /><path d="M9 6h9v9H9z" fill="#e4e5ef" stroke="#55556e" strokeWidth="2" /><path d="M21 16v5h-5z" fill="#000" stroke="none" /></Glyph></IconButton>
        <Divider />
        <Gap $w={2} />
        <Pen size={18} />
        <Combo label="Outline width" value="0,2 mm" width={88} />
        <Divider $gap={7} />
        <Glyph><circle cx="10" cy="10" r="6.500" stroke="#66667e" strokeWidth="1.400" /><path d="M8.500 2.500h3v3h-3zM8.500 14.500h3v3h-3zM2.500 8.500h3v3h-3zM14.500 8.500h3v3h-3z" fill={face} stroke={ink} /></Glyph>
      </PropertyBar>

      <Main>
        <Toolbox>
          {tools.map(([label, art], i) => (
            <ToolButton key={label} aria-label={label} $pressed={i === 0}><Glyph size={26}>{art}</Glyph></ToolButton>
          ))}
        </Toolbox>

        <Center>
          <DrawingGrid>
            <Glyph><path d="M7 9.500h10M11.500 6v11" strokeDasharray="2 1" stroke="#000" /><path d="M12 10l4 4M16.500 11v4.500H12" stroke="#000" /><path d="M8 19.500h12" strokeDasharray="2 2" stroke="#000" /></Glyph>
            <RulerTop><HorizontalRuler /></RulerTop>
            <RulerSide><VerticalRuler /></RulerSide>
            <Canvas><Drawing /></Canvas>
            <ScrollY>
              <ScrollButton aria-label="Scroll up"><Chevron dir="up" /></ScrollButton>
              <Track $grow={121} />
              <Thumb $vertical><svg width="7" height="8"><path d="M0 .5h6M0 2.500h6M0 4.500h6M0 6.500h6" stroke="#8fa8dd" /></svg></Thumb>
              <Track $grow={285} />
              <ScrollButton aria-label="Scroll down"><Chevron dir="down" /></ScrollButton>
            </ScrollY>
            <PageBar>
              <PageTools>
                <PageButton $width={12} aria-label="Add page before"><Glyph size={11}><path d="M1.500.5h5l3 3v7h-8zM3.500 6h4M5.500 4v4" fill="#fff" stroke="#000" /></Glyph></PageButton>
                <PageButton $width={22} aria-label="First page"><Glyph size={9}><path d="M1 0v9" stroke="#77756b" /><path d="M8 0v9L2.500 4.500z" fill="#77756b" stroke="none" /></Glyph></PageButton>
                <PageButton $width={14} aria-label="Previous page"><Tri dir="left" size={9} color="#77756b" /></PageButton>
                <PageCount>1 of 1</PageCount>
                <PageButton $width={22} aria-label="Next page"><Tri dir="right" size={9} color="#77756b" /></PageButton>
                <PageButton $width={12} aria-label="Last page"><Glyph size={9}><path d="M8 0v9" stroke="#77756b" /><path d="M1 0v9l5.500-4.500z" fill="#77756b" stroke="none" /></Glyph></PageButton>
                <PageButton $width={18} aria-label="Add page after"><Glyph size={11}><path d="M1.500.5h5l3 3v7h-8zM3.500 6h4M5.500 4v4" fill="#fff" stroke="#000" /></Glyph></PageButton>
                <TabEdge><Tab>Page 1</Tab></TabEdge>
                <Spacer />
                <Grip vertical />
              </PageTools>
              <PageScroll>
                <ScrollX>
                  <ScrollButton aria-label="Scroll left"><Chevron dir="left" /></ScrollButton>
                  <Track $grow={84} />
                  <Thumb><svg width="8" height="7"><path d="M.5 0v6M2.500 0v6M4.500 0v6M6.500 0v6" stroke="#8fa8dd" /></svg></Thumb>
                  <Track $grow={115} />
                  <ScrollButton aria-label="Scroll right"><Chevron dir="right" /></ScrollButton>
                </ScrollX>
                <PageButton $width={17} aria-label="Navigator"><Glyph size={16}><circle cx="6.500" cy="7" r="4.500" /><path d="M10 10.500l4 4" strokeWidth="2" /><path d="M6.500 5v4M4.500 7h4" /><path d="M5 5.500h3v3H5z" /></Glyph></PageButton>
              </PageScroll>
            </PageBar>
          </DrawingGrid>
          <DocumentPalette>
            <Gap $w={4} />
            <Grip vertical />
            <Gap $w={3} />
            <RoundButton aria-label="Palette options"><Tri dir="right" /></RoundButton>
            <Gap $w={3} />
            <Eyedropper />
            <Gap $w={2} />
            <Swatch $color="#fff" $selected aria-label="No color"><NoColor w={12} /></Swatch>
            <Swatch $color="#808080" aria-label="Gray" />
          </DocumentPalette>
        </Center>

        <Docker>
          <DockerHead>
            <DockerTitle>Transformations</DockerTitle>
            <HeadButton aria-label="Collapse"><svg width="10" height="9"><path d="M1 1l3.500 3.500L1 8M5 1l3.500 3.500L5 8" fill="none" stroke="#55534a" strokeWidth="1.500" /></svg></HeadButton>
            <HeadButton aria-label="Roll up"><Tri dir="up" size={9} color="#55534a" /></HeadButton>
            <HeadButton aria-label="Close docker"><svg width="9" height="9"><path d="M1 1l7 7M8 1L1 8" stroke="#55534a" strokeWidth="1.600" /></svg></HeadButton>
          </DockerHead>
          <Modes>
            <IconButton $width={24} $pressed aria-label="Position">{transforms.move}</IconButton>
            <IconButton $width={24} aria-label="Rotate">{transforms.rotate}</IconButton>
            <IconButton $width={24} aria-label="Scale and mirror">{transforms.scale}</IconButton>
            <IconButton $width={24} aria-label="Size">{transforms.size}</IconButton>
            <IconButton $width={24} aria-label="Skew">{transforms.skew}</IconButton>
          </Modes>
          <Position>
            <RowLabel htmlFor="move-x">x:</RowLabel><SpinField id="move-x" value="1,0 mm" />
            <RowLabel htmlFor="move-y">y:</RowLabel><SpinField id="move-y" value="1,0 mm" />
            <CheckLabel><Check type="checkbox" defaultChecked />Relative Position</CheckLabel>
            <AnchorButton aria-label="Anchor point">
              <svg width="39" height="39" fill="none" aria-hidden="true">
                <path d="M4.500 4.500h30v30h-30z" stroke="#a09fae" strokeWidth="2" />
                <rect x="13.500" y="13.500" width="12" height="12" rx="2" fill={face} stroke="#1a4e80" strokeWidth="1.400" />
                {[4, 19, 34].map(x => [4, 19, 34].map(y => (
                  <rect key={`${x}${y}`} x={x - 2.5} y={y - 2.5} width="6" height="6" fill="#fff" stroke="#8a89a0" />
                )))}
              </svg>
            </AnchorButton>
          </Position>
          <Copies>
            <RowLabel htmlFor="copies">Copies:</RowLabel><SpinField id="copies" value="100" />
          </Copies>
          <DockerFoot><ApplyButton>Apply</ApplyButton></DockerFoot>
        </Docker>

        <Palette $white>
          <PaletteHead $tail={39}>
            <Grip />
            <RoundButton aria-label="Document palette options"><Tri dir="right" /></RoundButton>
            <Eyedropper />
          </PaletteHead>
          <Swatch $color="#fff" $selected aria-label="No fill"><NoColor w={12} /></Swatch>
          {['#df2a1e', '#050505', '#df2a1e'].map((c, i) => <Swatch key={i} $color={c} aria-label={c} />)}
        </Palette>
        <Palette>
          <PaletteHead $tail={56}>
            <Grip />
            <RoundButton aria-label="Default palette options"><Tri dir="right" /></RoundButton>
            <Eyedropper off />
            <ScrollButton $off aria-label="Scroll palette up"><Chevron dir="up" color="#cbc9be" /></ScrollButton>
          </PaletteHead>
          <Swatch $color="#fff" aria-label="None"><NoColor /></Swatch>
          {paletteColors.map((c, i) => <Swatch key={c} $color={c} $selected={i === 4} aria-label={c} />)}
          <PaletteFoot>
            <ScrollButton aria-label="Scroll palette down"><Chevron dir="down" /></ScrollButton>
            <Glyph size={9}><path d="M1.500 0v9" stroke="#000" /><path d="M8 0v9L3 4.500z" fill="#000" stroke="none" /></Glyph>
          </PaletteFoot>
        </Palette>
      </Main>

      <StatusBar>
        <StatusMain>
          <StatusRow>
            <Coordinates>( 116,727; 275,027 ) <Tri dir="right" size={9} /></Coordinates>
            <StatusText>Rectangle on Layer 1</StatusText>
            <Proof>
              <Glyph size={16}><path d="M1.500 1.500h13v10h-13z" fill="#e3dfe8" stroke="#77778a" /><path d="M3 3h5v4H3z" fill="#e8a09a" stroke="none" /><path d="M8 3h5v4H8z" fill="#a5c9a5" stroke="none" /><path d="M3 7h10v3H3z" fill="#a9a9e0" stroke="none" /><rect x="5.500" y="4.500" width="5" height="4" fill="#fff" stroke="#66667e" /><path d="M5 14h7" strokeWidth="2" stroke="#9a9ab0" /></Glyph>
            </Proof>
          </StatusRow>
          <StatusRow>
            <ProfileText>Document color profiles: RGB: sRGB IEC61966-2.1; CMYK: ISO Coated v2 (ECI); Grayscale: Dot Gain 15%</ProfileText>
            <Tri dir="right" size={9} />
          </StatusRow>
        </StatusMain>
        <Divider $gap={1} />
        <StatusColors>
          <StatusRow><Bucket size={16} /><StatusSwatch $color="#808080" />C:0 M:0 Y:0 K:60</StatusRow>
          <StatusRow><Pen size={16} /><StatusSwatch $color="#141816" />C:0 M:0 Y:0 K:100  0,200 mm</StatusRow>
        </StatusColors>
        <UserButton aria-label="Account">
          <svg width="20" height="20" aria-hidden="true"><path d="M1.500 1.500h14v14h-14z" fill="#f6f4ee" stroke="#aaa8a0" /><ellipse cx="8.500" cy="6.500" rx="3" ry="4" fill="#d84a18" /><path d="M3 14.500q0-3 4-4h3q4 1 4 4z" fill="#d84a18" /><path d="M19 14v5h-5z" /></svg>
        </UserButton>
      </StatusBar>
      <FrameEdge />
    </AppWindow>
  );
}
